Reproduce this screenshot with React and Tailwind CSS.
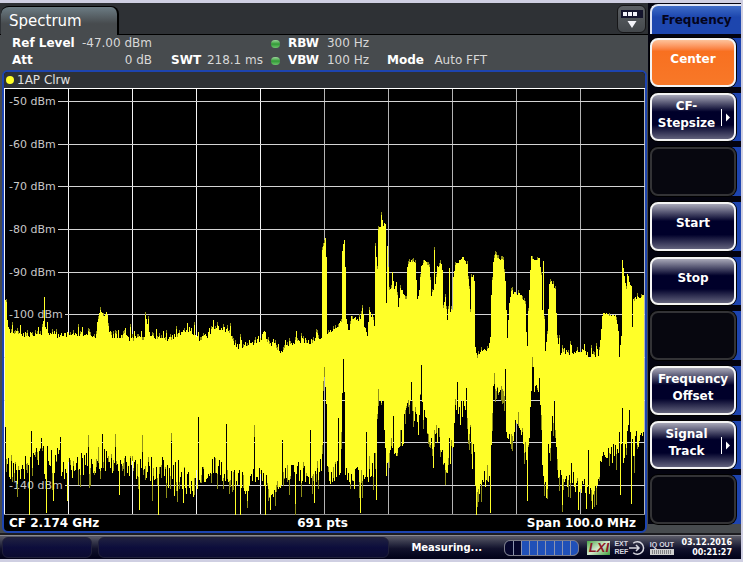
/**
 * Spectrum analyzer front panel
 *
 * Header readouts, trace plot, softkey column and status bar.
 */

import React from 'react';

// Plot geometry, in plot pixels
const LEFT = 4;
const TOP = 88;
const WIDTH = 641;
const HEIGHT = 428;

const LEVELS = [
  { y: 101, label: '-50 dBm' },
  { y: 144, label: '-60 dBm' },
  { y: 186, label: '-70 dBm' },
  { y: 229, label: '-80 dBm' },
  { y: 272, label: '-90 dBm' },
  { y: 314, label: '-100 dBm' },
  { y: 357, label: '' },
  { y: 400, label: '' },
  { y: 442, label: '' },
  { y: 485, label: '-140 dBm' },
];

// Upper edge of the trace: [x, y]
const PEAKS = [
  [4, 302], [6, 302], [7, 318], [9, 330], [14, 331], [20, 334], [42, 335], [43, 323], [44, 306], [45, 330],
  [60, 336], [80, 334], [96, 335], [97, 322], [100, 320], [101, 312], [104, 314], [107, 315], [108, 327],
  [111, 335], [130, 338], [144, 339], [145, 317], [147, 321], [149, 333], [152, 337], [170, 339], [180, 332],
  [186, 331], [190, 329], [198, 339], [207, 336], [213, 327], [220, 328], [230, 331], [233, 343], [240, 347],
  [250, 343], [260, 341], [264, 330], [267, 342], [275, 346], [282, 353], [286, 345], [296, 341], [310, 341],
  [321, 338], [322, 250], [324, 242], [325, 239], [326, 257], [327, 334], [331, 330], [336, 330], [341, 322],
  [342, 252], [344, 239], [345, 266], [346, 318], [348, 335], [351, 318], [354, 317], [358, 323], [361, 312],
  [364, 325], [367, 333], [369, 312], [372, 318], [374, 325], [375, 245], [377, 270], [378, 228], [380, 226],
  [381, 216], [383, 225], [385, 224], [386, 304], [387, 246], [389, 289], [391, 288], [392, 272], [394, 288],
  [396, 282], [398, 308], [400, 287], [404, 296], [406, 300], [407, 267], [409, 262], [412, 261], [415, 262],
  [417, 299], [419, 290], [421, 266], [424, 261], [429, 266], [431, 296], [433, 290], [434, 251], [435, 285],
  [437, 266], [441, 264], [442, 270], [443, 308], [445, 297], [447, 320], [448, 310], [449, 268], [450, 311],
  [452, 309], [453, 277], [455, 264], [459, 261], [463, 258], [467, 265], [469, 290], [470, 312], [471, 278],
  [473, 276], [474, 280], [475, 348], [477, 357], [481, 350], [488, 349], [490, 336], [491, 295], [493, 262],
  [495, 254], [497, 257], [503, 261], [505, 280], [507, 337], [509, 302], [511, 290], [513, 293], [520, 294],
  [525, 303], [526, 333], [527, 347], [528, 310], [530, 270], [531, 257], [534, 261], [539, 259], [541, 275],
  [542, 311], [543, 262], [544, 318], [545, 350], [547, 333], [549, 283], [551, 282], [555, 288], [557, 338],
  [560, 355], [570, 352], [580, 350], [590, 357], [595, 355], [596, 345], [598, 357], [600, 340], [602, 315],
  [605, 313], [610, 315], [615, 315], [618, 330], [619, 357], [621, 335], [622, 261], [624, 275], [626, 290],
  [627, 273], [629, 281], [631, 286], [632, 326], [633, 300], [637, 297], [645, 296],
];

// Lower edge of the trace: [x, shallow, deep]
const FLOOR = [
  [4, 430, 450], [8, 448, 478], [20, 455, 487], [30, 445, 477], [60, 445, 485], [70, 455, 478], [100, 445, 475],
  [120, 455, 472], [150, 455, 487], [190, 460, 497], [200, 468, 487], [215, 455, 475], [230, 468, 490],
  [240, 470, 500], [260, 465, 485], [270, 480, 500], [290, 462, 482], [318, 460, 487], [322, 440, 470],
  [323, 378, 385], [326, 400, 450], [328, 465, 490], [340, 455, 475], [342, 390, 405], [344, 375, 400],
  [345, 468, 475], [350, 468, 492], [360, 465, 490], [370, 455, 485], [376, 450, 480], [377, 410, 420],
  [380, 395, 405], [383, 400, 415], [386, 450, 480], [392, 430, 460], [397, 430, 474], [402, 425, 460],
  [406, 400, 410], [412, 395, 410], [417, 400, 450], [420, 390, 412], [427, 420, 435], [432, 430, 475],
  [438, 420, 450], [443, 450, 480], [449, 430, 470], [453, 430, 450], [455, 395, 405], [459, 400, 440],
  [464, 395, 410], [470, 420, 460], [474, 450, 490], [480, 475, 500], [487, 465, 490], [491, 440, 480],
  [493, 385, 390], [498, 383, 393], [504, 385, 400], [506, 430, 480], [510, 435, 445], [516, 415, 438],
  [522, 425, 435], [527, 450, 497], [529, 420, 440], [531, 385, 395], [536, 380, 390], [540, 395, 405],
  [542, 430, 485], [547, 440, 490], [552, 415, 425], [555, 420, 440], [558, 455, 482], [565, 470, 492],
  [578, 472, 495], [590, 480, 497], [598, 478, 492], [601, 450, 465], [610, 445, 462], [617, 430, 465],
  [622, 430, 480], [627, 425, 450], [632, 420, 470], [640, 425, 442], [645, 420, 430],
];

// Single sweeps that leave the floor, upwards or downwards
const SPIKES = {
  5: 427, 29: 515, 31: 431, 41: 438, 46: 513, 53: 501, 60: 437, 67: 501, 88: 435, 102: 434, 115: 434, 119: 495,
  139: 510, 142: 435, 158: 515, 171: 433, 174: 496, 183: 503, 193: 497, 198: 417, 226: 424, 235: 515, 240: 515,
  247: 501, 254: 425, 265: 515, 270: 510, 282: 440, 295: 504, 310: 430, 314: 503, 324: 367, 325: 387, 338: 418,
  343: 359, 360: 513, 366: 432, 376: 500, 378: 389, 393: 416, 411: 382, 421: 365, 457: 382, 466: 388, 476: 515,
  490: 513, 494: 373, 505: 369, 518: 412, 527: 501, 532: 357, 533: 367, 539: 378, 546: 498, 554: 400, 562: 505,
  571: 463, 578: 510, 586: 509, 588: 450, 592: 509, 620: 495, 622: 408, 629: 410, 631: 504,
};

const hash = (n) => {
  const v = Math.sin(n * 127.1 + 11.7) * 43758.5453;
  return v - Math.floor(v);
};

const interpolate = (points, x, column) => {
  const next = points.findIndex((p) => p[0] >= x);
  if (next <= 0) return points[0][column];
  const a = points[next - 1];
  const b = points[next];
  return a[column] + ((b[column] - a[column]) * (x - a[0])) / (b[0] - a[0]);
};

const buildTrace = () => {
  let bright = '';
  let dim = '';
  for (let x = LEFT + 1; x < LEFT + WIDTH - 1; x++) {
    const isNoise = x < 320 || (x > 327 && x < 341) || (x > 346 && x < 374) || (x > 558 && x < 598);
    const jitter = isNoise ? 6 : 3;
    let top = interpolate(PEAKS, x, 1) + (hash(x) - 0.5) * jitter;
    if (isNoise && hash(x + 900) > 0.88) top -= 4 + hash(x + 50) * 5;
    const shallow = interpolate(FLOOR, x, 1);
    const deep = interpolate(FLOOR, x, 2);
    const bottom = SPIKES[x] ?? shallow + (deep - shallow) * hash(x + 300);
    const y0 = Math.round(top) - TOP;
    const y1 = Math.min(Math.round(bottom), 515) - TOP;
    const cx = x - LEFT;
    bright += `M${cx} ${y0}h1V${y1}h-1z`;
    if (hash(x + 77) > 0.7) {
      dim += `M${cx} ${y0 - 3}h1V${Math.min(y1 + Math.round(hash(x + 5) * 18), 427)}h-1z`;
    }
  }
  return { bright, dim };
};

const TRACE = buildTrace();

const SOFTKEYS = [
  { lines: ['Center'], active: true },
  { lines: ['CF-', 'Stepsize'], submenu: true },
  null,
  { lines: ['Start'] },
  { lines: ['Stop'] },
  null,
  { lines: ['Frequency', 'Offset'] },
  { lines: ['Signal', 'Track'], submenu: true },
  null,
];

const Reading = ({ name, value }) => (
  <div className="flex justify-between gap-1 whitespace-nowrap">
    <span className="font-bold text-white">{name}</span>
    <span>{value}</span>
  </div>
);

const Led = () => (
  <span className="h-[8px] w-[9px] rounded-full bg-linear-to-b from-[#9ad89a] via-[#2f9a35] to-[#6cc46c]" />
);

const Header = () => (
  <section className="flex h-[35px] items-start bg-[#474b4e] pl-3 text-[12px] leading-[17px] text-[#d8d8d8]">
    <div className="w-[140px]">
      <Reading name="Ref Level" value="-47.00 dBm" />
      <Reading name="Att" value="0 dB" />
    </div>
    <div className="ml-[19px] w-[92px] pt-[17px]">
      <Reading name="SWT" value="218.1 ms" />
    </div>
    <div className="ml-2">
      <div className="flex items-center gap-2">
        <Led />
        <div className="w-[81px]">
          <Reading name="RBW" value="300 Hz" />
        </div>
      </div>
      <div className="flex items-center gap-2">
        <Led />
        <div className="w-[81px]">
          <Reading name="VBW" value="100 Hz" />
        </div>
      </div>
    </div>
    <div className="ml-[18px] w-[100px] pt-[17px]">
      <Reading name="Mode" value="Auto FFT" />
    </div>
  </section>
);

const Plot = () => (
  <svg viewBox={`0 0 ${WIDTH} ${HEIGHT}`} className="block w-full bg-black" role="img" aria-label="Spectrum trace">
    <g shapeRendering="crispEdges">
      {Array.from({ length: 11 }, (_, i) => (
        <rect key={i} x={i * 64} y="0" width="1" height={HEIGHT - 1} fill={i < 5 ? '#f4f4f4' : '#b4b4b4'} />
      ))}
      <rect x="0" y="0" width={WIDTH} height="1" fill="#ffffff" />
      <rect x="0" y={HEIGHT - 2} width={WIDTH} height="1" fill="#909090" />
      {LEVELS.map(({ y, label }) => {
        const start = label.length > 7 ? 61 : label ? 54 : 0;
        return <rect key={y} x={start} y={y - TOP} width={WIDTH - start} height="1" fill="#d4d4d4" />;
      })}
    </g>
    {LEVELS.filter(({ label }) => label).map(({ y, label }) => (
      <text key={y} x="5" y={y - TOP + 4} fontSize="11" fill="#c8c8c8">
        {label}
      </text>
    ))}
    <g shapeRendering="crispEdges">
      <path d={TRACE.dim} fill="#8f8f18" />
      <path d={TRACE.bright} fill="#ffff28" />
    </g>
  </svg>
);

const Softkey = ({ item }) => {
  if (!item) {
    return (
      <button
        disabled
        aria-label="Unassigned softkey"
        className="mr-[5px] flex-1 rounded-lg border-2 border-[#333336] bg-[#07070f] ring-1 ring-black"
      />
    );
  }
  const face = item.active
    ? 'bg-linear-to-b from-[#fdc29a] via-[#f87020] via-25% to-[#f87828]'
    : 'bg-[linear-gradient(to_bottom,#a8a8b8,#00002a_38%,#00002a_68%,#62627c)]';
  return (
    <button
      className={`mr-[5px] flex flex-1 items-center rounded-lg border-2 border-[#f4f4f4] text-[12px] leading-[17px] font-bold text-white ring-1 ring-black ${face}`}
    >
      <span className="flex-1 pb-[5px]">
        {item.lines.map((line) => (
          <span key={line} className="block">
            {line}
          </span>
        ))}
      </span>
      {item.submenu && (
        <svg className="mr-[3px] h-[17px] w-[10px]" viewBox="0 0 10 17" fill="#ffffff">
          <rect x="0" y="0" width="1" height="17" />
          <path d="M5 4.500L9 8.500L5 12.500z" />
        </svg>
      )}
    </button>
  );
};

const StatusBar = () => (
  <footer className="flex h-[24px] items-center border-t border-[#8a8a92] bg-linear-to-b from-[#5c5c68] via-[#12122c] via-55% to-[#020218] text-white">
    <div className="ml-[2px] h-[21px] w-[90px] rounded-md border border-[#20203a] bg-linear-to-b from-[#202040] via-[#0d0d3c] to-[#0b0b30]" />
    <div className="ml-[6px] h-[21px] flex-1 rounded-md border border-[#20203a] bg-linear-to-b from-[#202040] via-[#0d0d3c] to-[#0b0b30]" />
    <span className="ml-[22px] w-[78px] text-[10px] font-bold whitespace-nowrap">Measuring...</span>
    <div className="mr-px ml-[15px] flex h-[16px] w-[75px] gap-px overflow-hidden rounded-md border border-[#7c7c88] bg-[#8c94b0]">
      {Array.from({ length: 9 }, (_, i) => (
        <span key={i} className={i < 2 ? 'flex-1 bg-[#06062c]' : 'flex-1 bg-[#2050b8]'} />
      ))}
    </div>
    <span className="ml-[7px] flex h-[14px] w-[23px] items-center justify-center bg-linear-to-br from-[#45a845] via-[#d4e8d0] to-[#38a038] font-['Liberation_Sans',sans-serif] text-[13px] leading-none font-bold text-[#8c1824] italic">
      LXI
    </span>
    <span className="ml-1 w-[15px] font-['Liberation_Sans',sans-serif] text-[7px] leading-[8px] font-bold text-[#d8d8e0]">
      EXT REF
    </span>
    <svg className="h-[16px] w-[16px]" viewBox="0 0 16 16" fill="none" stroke="#d8d8e0" strokeWidth="1.500">
      <path d="M4.200 3.200A6.300 6.300 0 1 1 4.200 12.800" />
      <path d="M0 8H10M7 5L10 8L7 11" />
    </svg>
    <div className="ml-[3px] flex w-[27px] flex-col items-center font-['Liberation_Sans',sans-serif] text-[7px] leading-[8px] font-bold whitespace-nowrap text-[#d8d8e0]">
      IQ OUT
      <svg className="h-[6px] w-[24px]" viewBox="0 0 24 6">
        <rect width="24" height="6" fill="#d0d0d0" />
        <path d="M2 2H22M2 4H22" stroke="#303038" strokeDasharray="1 1" />
      </svg>
    </div>
    <time className="mr-[9px] ml-[6px] text-right text-[8px] leading-[10px] font-bold">
      03.12.2016
      <br />
      00:21:27
    </time>
  </footer>
);

const App = () => {
  return (
    <div className="min-h-screen w-full bg-[#cfcfe2] pt-[3px] pr-[2px] font-['DejaVu_Sans',sans-serif]">
      <div className="flex bg-[#474b4e]">
        <main className="min-w-0 flex-1">
          {/* Channel tabs */}
          <div className="flex h-[32px] items-end justify-between border-b border-black bg-[#2e3135] pr-[2px] pl-px">
            <button className="-mb-px h-[29px] w-[118px] rounded-t-lg border-t border-r-2 border-black bg-linear-to-b from-[#6c7c84] to-[#474b4e] to-60% pl-2 text-left text-[15px] leading-[24px] font-medium text-white">
              Spectrum
            </button>
            <button
              aria-label="Channel list"
              className="mb-px flex h-[28px] w-[29px] items-center justify-center rounded-md border border-[#161618] bg-linear-to-b from-[#5c6064] to-[#44484c]"
            >
              <svg width="22" height="20" viewBox="0 0 22 20">
                <rect x="0" y="1" width="22" height="8" fill="#14142c" />
                <path d="M2 3h4v4h-4zM7 3h4v4h-4zM12 3h4v4h-4zM6.500 12h9L11 19z" fill="#f4f4fa" />
              </svg>
            </button>
          </div>

          <Header />

          {/* Trace window */}
          <section className="mr-px ml-[2px] overflow-hidden rounded-md border-2 border-[#1d44b0] bg-black">
            <div className="flex h-[16px] items-center gap-[3px] bg-[#2e3135] pl-[2px] text-[12px] leading-[14px] text-[#e0e0e0]">
              <span className="h-[8px] w-[8px] rounded-full bg-[#ffff28]" />
              1AP Clrw
            </div>
            <Plot />
            <div className="grid h-[15px] grid-cols-3 items-center pr-[9px] pl-[5px] text-[12px] leading-[15px] font-bold text-white">
              <span>CF 2.174 GHz</span>
              <span className="text-center">691 pts</span>
              <span className="text-right">Span 100.0 MHz</span>
            </div>
          </section>
        </main>

        {/* Softkey column */}
        <nav className="flex w-[93px] flex-col">
          <div className="bg-[#03030f] pt-px pl-[2px]">
            <h1 className="h-[30px] rounded-tl-lg border-t-2 border-l-2 border-[#dfe4f4] bg-linear-to-b from-[#3f6cc8] to-[#1d46ae] to-40% text-center text-[12px] leading-[28px] font-bold text-[#04041c]">
              Frequency
            </h1>
          </div>
          <ul className="flex flex-1 flex-col gap-[6px] bg-[#03030f] pt-[4px]">
            {SOFTKEYS.map((item, i) => (
              <li key={i} className="flex flex-1 bg-linear-to-r from-[#03030f] from-90% to-[#1d44b0] to-90% pl-[2px]">
                <Softkey item={item} />
              </li>
            ))}
          </ul>
          <div className="h-[9px]" />
        </nav>
      </div>
      <div className="h-[2px] bg-[#1c1c20]" />
      <StatusBar />
    </div>
  );
};

export default App;
